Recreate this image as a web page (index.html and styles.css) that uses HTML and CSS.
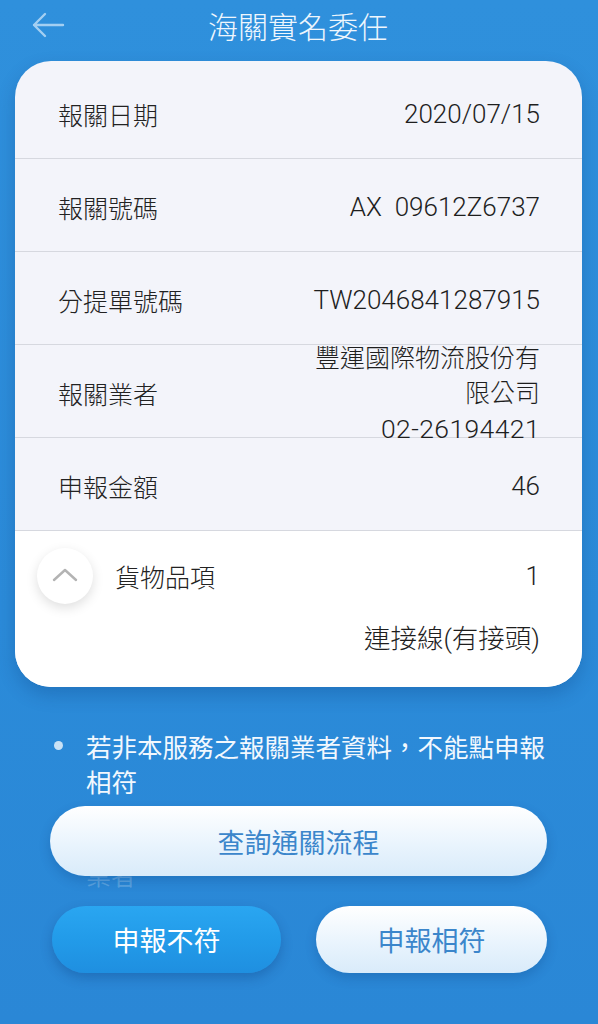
FILE: index.html
```html
<!DOCTYPE html>
<html lang="zh-Hant">
  <head>
    <meta charset="UTF-8" />
    <meta name="viewport" content="width=device-width, initial-scale=1.0" />
    <title>海關實名委任</title>
    <link rel="stylesheet" href="styles.css">
  </head>
  <body>
    <div class="screen">
      <header class="topbar">
        <button class="back" aria-label="返回">
          <svg width="34" height="26" viewBox="0 0 34 26">
            <path d="M32 13H3M14 2L3 13l11 11" fill="none" stroke="#a3cff2" stroke-width="2.4" stroke-linecap="round" stroke-linejoin="round" />
          </svg>
        </button>
        <h1 class="title">海關實名委任</h1>
        <span></span>
      </header>

      <div class="card">
        <div class="row first">
          <span class="label">報關日期</span>
          <span class="value">2020/07/15</span>
        </div>
        <div class="row">
          <span class="label">報關號碼</span>
          <span class="value">AX&nbsp;&nbsp;09612Z6737</span>
        </div>
        <div class="row">
          <span class="label">分提單號碼</span>
          <span class="value">TW2046841287915</span>
        </div>
        <div class="row">
          <span class="label">報關業者</span>
          <span class="value multi">豐運國際物流股份有限公司<br /><span class="phone">02-26194421</span></span>
        </div>
        <div class="row">
          <span class="label">申報金額</span>
          <span class="value">46</span>
        </div>

        <div class="goods">
          <div class="goods-head">
            <span class="toggle">
              <svg width="26" height="14" viewBox="0 0 26 14">
                <path d="M2 12L13 2l11 10" fill="none" stroke="#b3b3b3" stroke-width="2.4" stroke-linecap="round" stroke-linejoin="round" />
              </svg>
            </span>
            <span class="label">貨物品項</span>
            <span class="value">1</span>
          </div>
          <div class="goods-item">連接線(有接頭)</div>
        </div>
      </div>

      <ul class="notes">
        <li>若非本服務之報關業者資料，不能點申報相符</li>
      </ul>

      <button class="btn btn-light btn-wide">查詢通關流程</button>
      <div class="ghost">業者</div>

      <div class="actions">
        <button class="btn btn-blue">申報不符</button>
        <button class="btn btn-light">申報相符</button>
      </div>
    </div>
  </body>
</html>
```

FILE: styles.css
```css
body {
  margin: 0;
  font-family: "Roboto", "Noto Sans CJK TC", sans-serif;
  background: #2c8ddb;
}
.screen {
  width: 598px;
  height: 1024px;
  overflow: hidden;
  background: linear-gradient(180deg, #2f90dc 0%, #2b8bd9 60%, #2a87d6 100%);
}
.topbar {
  height: 50px;
  display: grid;
  grid-template-columns: 1fr auto 1fr;
  align-items: center;
}
.back {
  justify-self: start;
  margin-left: 31px;
  padding: 0;
  border: none;
  background: none;
  display: flex;
}
.title {
  margin: 0 0 0 -2px;
  font-family: "Noto Sans CJK TC", sans-serif;
  font-size: 30px;
  font-weight: 300;
  color: #eef6fd;
  line-height: 50px;
}
.card {
  margin: 11px 16px 0 15px;
  background: #f3f4fa;
  border-radius: 36px;
  overflow: hidden;
  box-shadow: 0 8px 18px rgba(0, 40, 100, 0.22);
}
.row {
  height: 93px;
  display: flex;
  align-items: center;
  justify-content: space-between;
  padding: 3px 42px 0 43px;
  box-sizing: border-box;
  border-bottom: 1px solid #d6d8df;
}
.row.first {
  height: 98px;
  padding-top: 9px;
}
.label {
  font-family: "Noto Sans CJK TC", sans-serif;
  font-size: 25px;
  font-weight: 300;
  color: #222;
  white-space: nowrap;
}
.value {
  font-size: 26px;
  font-weight: 300;
  color: #1e1e1e;
  text-align: right;
  white-space: nowrap;
}
.value.multi {
  white-space: normal;
  width: 232px;
  font-size: 25px;
  line-height: 35px;
  margin-top: 2px;
}
.phone {
  font-size: 26.5px;
  letter-spacing: 0.4px;
}
.goods {
  background: #ffffff;
  padding: 17px 42px 31px 22px;
}
.goods-head {
  display: flex;
  align-items: center;
  height: 56px;
}
.toggle {
  width: 56px;
  height: 56px;
  border-radius: 50%;
  background: #ffffff;
  box-shadow: 0 4px 12px rgba(0, 0, 0, 0.13);
  display: flex;
  align-items: center;
  justify-content: center;
  margin-right: 22px;
}
.toggle svg {
  margin-top: -3px;
}
.goods-head .value {
  margin-left: auto;
}
.goods-item {
  margin-top: 17px;
  text-align: right;
  font-size: 26.5px;
  font-weight: 300;
  line-height: 35px;
  color: #1e1e1e;
}
.notes {
  list-style: none;
  margin: 41px 52px 0 54px;
  padding: 0;
}
.notes li {
  position: relative;
  padding-left: 32px;
  font-family: "Noto Sans CJK TC", sans-serif;
  font-size: 25.5px;
  line-height: 35px;
  color: #f2f8fe;
}
.notes li::before {
  content: "";
  position: absolute;
  left: 0;
  top: 13px;
  width: 9px;
  height: 9px;
  border-radius: 50%;
  background: rgba(255, 255, 255, 0.75);
}
.btn {
  border: none;
  border-radius: 40px;
  font-family: "Noto Sans CJK TC", sans-serif;
  font-size: 27px;
  cursor: pointer;
}
.btn-light {
  background: linear-gradient(180deg, #ffffff 0%, #e9f4fd 55%, #d9ebfa 100%);
  color: #3b86cb;
  box-shadow: 0 5px 12px rgba(0, 40, 100, 0.2);
}
.btn-blue {
  background: linear-gradient(180deg, #2aa6f1 0%, #229be9 50%, #1f8fe0 100%);
  color: #ffffff;
  box-shadow: 0 5px 12px rgba(0, 40, 100, 0.25);
}
.btn-wide {
  position: relative;
  z-index: 1;
  display: block;
  width: 497px;
  height: 70px;
  margin: 8px 0 0 50px;
}
.ghost {
  margin: -17px 0 0 86px;
  font-size: 25px;
  line-height: 35px;
  color: rgba(255, 255, 255, 0.22);
}
.actions {
  display: grid;
  grid-template-columns: 229px 231px;
  gap: 35px;
  margin: 12px 0 0 52px;
}
.actions .btn {
  height: 67px;
}
```
